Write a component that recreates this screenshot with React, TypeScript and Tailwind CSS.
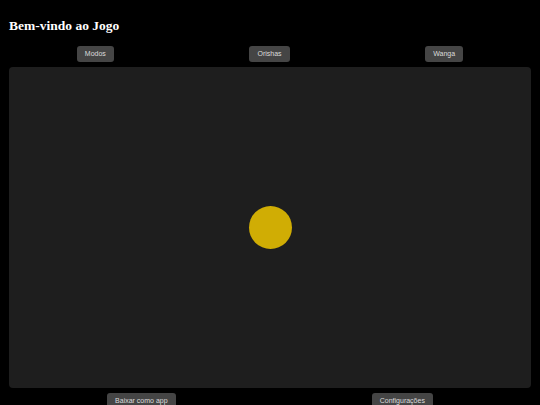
import React from "react";

function Btn({ children }: { children: React.ReactNode }) {
  return (
    <button className="h-4 px-2 rounded-[3px] bg-[#454545] text-[#dcdcdc] text-[7px] leading-4 font-['Liberation_Sans',Arial,sans-serif]">
      {children}
    </button>
  );
}

export default function App() {
  return (
    <div className="w-[540px] h-[405px] overflow-hidden bg-black px-[9px] pt-[18px]">
      <h1 className="text-white font-bold text-[13.5px] leading-4 font-['Liberation_Serif','Times_New_Roman',serif] m-0">
        Bem-vindo ao Jogo
      </h1>
      <div className="flex justify-around mt-3">
        <Btn>Modos</Btn>
        <Btn>Orishas</Btn>
        <Btn>Wanga</Btn>
      </div>
      <div className="mt-[5px] h-[321px] rounded-[4px] bg-[#1e1e1e] flex items-center justify-center">
        <div className="w-[43px] h-[43px] rounded-full bg-[#d0ad04]" />
      </div>
      <div className="flex justify-around mt-[5px]">
        <Btn>Baixar como app</Btn>
        <Btn>Configurações</Btn>
      </div>
    </div>
  );
}
